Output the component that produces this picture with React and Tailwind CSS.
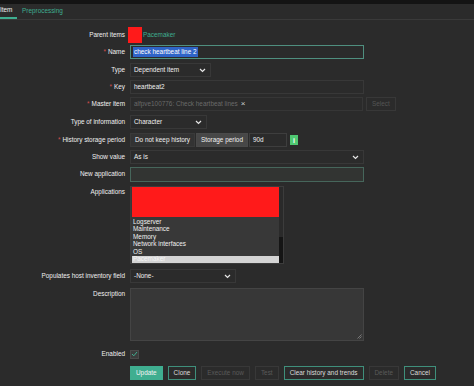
import React from "react";

const font = { fontFamily: "'Liberation Sans', Arial, sans-serif" };

function Chevron() {
  return (
    <svg width="7" height="5" viewBox="0 0 7 5" className="shrink-0">
      <path d="M1 1 L3.5 3.5 L6 1" stroke="#e6e6e6" strokeWidth="1.2" fill="none" />
    </svg>
  );
}

function Row({ label, required, top = "center", className = "", children }) {
  return (
    <div className={`flex ${className}`}>
      <div
        className={`w-[125px] shrink-0 flex justify-end pr-0 text-[#f0f0f0] ${
          top === "center" ? "items-center" : "items-start pt-[3px]"
        }`}
      >
        {required && <span className="text-[#d64e4e] mr-[2px]">*</span>}
        {label}
      </div>
      <div className="ml-[5px] flex items-center">{children}</div>
    </div>
  );
}

function Select({ width, value }) {
  return (
    <div
      className={`${width} h-[14px] border border-[#383838] bg-[#2b2b2b] flex items-center justify-between pl-[3px] pr-[4px] text-[#f0f0f0]`}
    >
      <span>{value}</span>
      <Chevron />
    </div>
  );
}

function Btn({ children, kind }) {
  const styles = {
    main: "bg-[#3fae90] border-[#3fae90] text-[#f4f4f4]",
    alt: "bg-[#2b2b2b] border-[#3f8f7b] text-[#dcdcdc]",
    off: "bg-[#2b2b2b] border-[#383838] text-[#5a5a5a]",
  };
  return (
    <div className={`h-[14px] border flex items-center px-[5px] ${styles[kind]}`}>{children}</div>
  );
}

export default function App() {
  const apps = ["Logserver", "Maintenance", "Memory", "Network interfaces", "OS"];
  return (
    <div className="w-[474px] h-[386px] bg-[#2b2b2b] overflow-hidden text-[6.4px] leading-none" style={font}>
      {/* top strip */}
      <div className="h-[4px] bg-[#141414]" />

      {/* tabs */}
      <div className="h-[16px] border-b border-[#3a3a3a] flex items-end">
        <div className="h-full w-[17px] flex items-center border-b-2 border-[#3fae90] text-[#f0f0f0]">
          Item
        </div>
        <div className="h-full ml-[5px] flex items-center text-[#3fae90]">Preprocessing</div>
      </div>

      {/* form */}
      <div className="flex flex-col pt-[7px]">
        <Row label="Parent items" className="h-[16px]">
          <div className="w-[14px] h-[16px] bg-[#ff1a1a] -ml-[2px]" />
          <span className="ml-[1px] text-[#3fae90]">Pacemaker</span>
        </Row>

        <Row label="Name" required className="h-[14px] mt-[2px]">
          <div className="w-[234px] h-[14px] border border-[#4f8f7f] bg-[#2b2b2b] flex items-center pl-[2px]">
            <span className="bg-[#2f64c8] text-white px-[1px] py-[1.5px]">check heartbeat line 2</span>
          </div>
        </Row>

        <Row label="Type" className="h-[14px] mt-[4px]">
          <Select width="w-[81px]" value="Dependent item" />
        </Row>

        <Row label="Key" required className="h-[14px] mt-[3px]">
          <div className="w-[234px] h-[14px] border border-[#383838] bg-[#2b2b2b] flex items-center pl-[3px] text-[#f0f0f0]">
            heartbeat2
          </div>
        </Row>

        <Row label="Master item" required className="h-[14px] mt-[3px]">
          <div className="w-[233px] h-[14px] border border-[#363636] bg-[#2b2b2b] flex items-center pl-[3px] text-[#6a6a6a]">
            alfpve100776: Check heartbeat lines
            <span className="ml-[3px] text-[#cfcfcf] text-[8px]">×</span>
          </div>
          <div className="ml-[3px] h-[14px] border border-[#383838] flex items-center px-[5px] text-[#555]">
            Select
          </div>
        </Row>

        <Row label="Type of information" className="h-[14px] mt-[4px]">
          <Select width="w-[77px]" value="Character" />
        </Row>

        <Row label="History storage period" required className="h-[14px] mt-[4px]">
          <div className="h-[14px] w-[65px] bg-[#333333] border border-[#3a3a3a] flex items-center justify-center text-[#f0f0f0]">
            Do not keep history
          </div>
          <div className="ml-[1px] h-[14px] w-[52px] bg-[#474747] border border-[#4a4a4a] flex items-center justify-center text-[#f0f0f0]">
            Storage period
          </div>
          <div className="ml-[1px] h-[14px] w-[38px] bg-[#2b2b2b] border border-[#3e3e3e] flex items-center pl-[3px] text-[#f0f0f0]">
            90d
          </div>
          <div className="ml-[3px] w-[8px] h-[10px] bg-[#4fc872] flex items-center justify-center text-white font-bold text-[7px]">
            i
          </div>
        </Row>

        <Row label="Show value" className="h-[14px] mt-[3px]">
          <Select width="w-[234px]" value="As is" />
        </Row>

        <Row label="New application" className="h-[15px] mt-[3px]">
          <div className="w-[234px] h-[15px] border border-[#46665b] bg-[#323432]" />
        </Row>

        <Row label="Applications" top="start" className="h-[78px] mt-[4px]">
          <div className="w-[154px] h-[78px] border border-[#3c3c3c] bg-[#383838] flex self-start">
            <div className="flex-1 flex flex-col">
              <div className="h-[33px] bg-[#ff1a1a] ml-[1px]" />
              <div className="flex flex-col pl-[2px] pt-[1px] text-[#f0f0f0]">
                {apps.map((a) => (
                  <div key={a} className="h-[7.5px] flex items-center">{a}</div>
                ))}
                <div className="h-[7.5px] flex items-center bg-[#d4d4d4] text-[#f4f4f4] -ml-[1px] pl-[1px]">
                  Pacemaker
                </div>
              </div>
            </div>
            <div className="w-[4px] flex flex-col bg-[#2a2a2a]">
              <div className="h-[32px]" />
              <div className="flex-1 bg-[#151515] mt-[18px]" />
            </div>
          </div>
        </Row>

        <Row label="Populates host inventory field" className="h-[14px] mt-[5px]">
          <Select width="w-[106px]" value="-None-" />
        </Row>

        <Row label="Description" top="start" className="h-[53px] mt-[5px]">
          <div className="w-[234px] h-[53px] border border-[#444] bg-[#373737] self-start relative">
            <svg width="5" height="5" viewBox="0 0 5 5" className="absolute right-[1px] bottom-[1px]">
              <path d="M4.5 0.5 L0.5 4.5 M4.5 2.5 L2.5 4.5" stroke="#888" strokeWidth="0.8" />
            </svg>
          </div>
        </Row>

        <Row label="Enabled" className="h-[10px] mt-[8px]">
          <div className="w-[9px] h-[9px] bg-[#3c3c3c] border border-[#4a4a4a] flex items-center justify-center">
            <svg width="7" height="6" viewBox="0 0 7 6">
              <path d="M1 3 L2.8 4.8 L6 1" stroke="#3fae90" strokeWidth="1" fill="none" />
            </svg>
          </div>
        </Row>

        <div className="flex mt-[7px] ml-[130px] gap-[5px]">
          <Btn kind="main">Update</Btn>
          <Btn kind="alt">Clone</Btn>
          <Btn kind="off">Execute now</Btn>
          <Btn kind="off">Test</Btn>
          <Btn kind="alt">Clear history and trends</Btn>
          <Btn kind="off">Delete</Btn>
          <Btn kind="alt">Cancel</Btn>
        </div>
      </div>
    </div>
  );
}
